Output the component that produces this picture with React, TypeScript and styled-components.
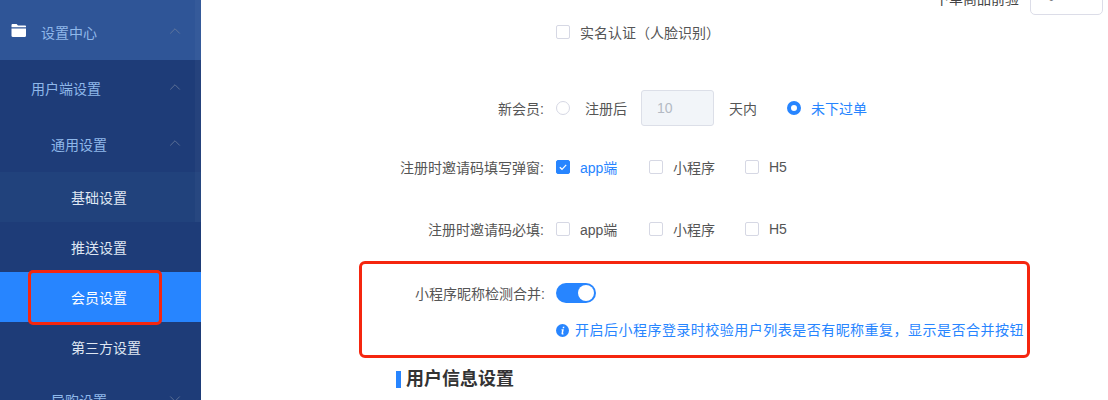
import React from 'react';
import styled, { createGlobalStyle } from 'styled-components';
import { ChevronDown, ChevronUp } from 'lucide-react';

const GlobalStyle = createGlobalStyle`
  html, body {
    margin: 0;
    padding: 0;
    background: #fff;
    font-family: "Liberation Sans", "Noto Sans CJK SC", sans-serif;
  }
`;

const App: React.FC = () => (
  <Page>
    <GlobalStyle />
    <Sidebar>
      <ScrollThumb />
      <TopItem>
        <FolderIcon />
        <TopLabel>设置中心</TopLabel>
        <Arrow><ChevronUp size={18} strokeWidth={1} /></Arrow>
      </TopItem>
      <GroupItem $indent={31}>
        <span>用户端设置</span>
        <Arrow><ChevronUp size={18} strokeWidth={1} /></Arrow>
      </GroupItem>
      <GroupItem $indent={51}>
        <span>通用设置</span>
        <Arrow><ChevronUp size={18} strokeWidth={1} /></Arrow>
      </GroupItem>
      <LeafList>
        <Leaf $shade="#21427c">基础设置</Leaf>
        <Leaf>推送设置</Leaf>
        <Leaf $active>
          会员设置
          <MenuHighlight />
        </Leaf>
        <Leaf>第三方设置</Leaf>
      </LeafList>
      <GroupItem $indent={51}>
        <span>导购设置</span>
        <Arrow><ChevronDown size={18} strokeWidth={1} /></Arrow>
      </GroupItem>
    </Sidebar>
    <Content>
      <TopRow>
        <TopRowLabel>下单商品前验</TopRowLabel>
        <TopInput>0</TopInput>
      </TopRow>
      <Row $height={50} $mt={-8}>
        <Field />
        <Check label="实名认证（人脸识别）" />
      </Row>
      <Row $height={36} $mt={33}>
        <Field>新会员:</Field>
        <RadioBox />
        <OptionText>注册后</OptionText>
        <DaysInput>10</DaysInput>
        <OptionText $gap={15}>天内</OptionText>
        <RadioBox $on $ml={30} />
        <OptionText $on>未下过单</OptionText>
      </Row>
      <Row $height={36} $mt={23}>
        <Field>注册时邀请码填写弹窗:</Field>
        <Check label="app端" width={93} on />
        <Check label="小程序" width={96} />
        <Check label="H5" />
      </Row>
      <Row $height={36} $mt={26}>
        <Field>注册时邀请码必填:</Field>
        <Check label="app端" width={93} />
        <Check label="小程序" width={96} />
        <Check label="H5" />
      </Row>
      <HighlightBox>
        <SwitchRow>
          <Field $inset>小程序昵称检测合并:</Field>
          <Switch><Knob /></Switch>
        </SwitchRow>
        <Hint>
          <InfoIcon />
          开启后小程序登录时校验用户列表是否有昵称重复，显示是否合并按钮
        </Hint>
      </HighlightBox>
      <SectionTitle>用户信息设置</SectionTitle>
    </Content>
  </Page>
);

const Check: React.FC<{ label: string; on?: boolean; width?: number }> = ({ label, on, width }) => (
  <CheckWrap $width={width}>
    <CheckBox $on={on}>
      {on && (
        <svg width="10" height="10" viewBox="0 0 10 10" fill="none">
          <path d="M1.8 5.2 4 7.3 8.2 2.8" stroke="#fff" strokeWidth="1.2" />
        </svg>
      )}
    </CheckBox>
    <CheckText $on={on}>{label}</CheckText>
  </CheckWrap>
);

const FolderIcon: React.FC = () => (
  <FolderSvg width="15" height="13" viewBox="0 0 15 13">
    <path d="M0.5 1.2C0.5 0.6 1 0 1.6 0H5.6L7 1.6H14C14.5 1.6 15 2 15 2.6V3.2H0.5Z" fill="#fff" />
    <path d="M0.5 4.4H15V11.8C15 12.4 14.5 13 14 13H1.6C1 13 0.5 12.4 0.5 11.8Z" fill="#fff" />
  </FolderSvg>
);

const InfoIcon: React.FC = () => (
  <HintSvg width="13" height="13" viewBox="0 0 13 13">
    <circle cx="6.5" cy="6.5" r="6.5" fill="#2785ff" />
    <path d="M6.9 2.7h1.5l-.3 1.5H6.6ZM6.3 5.2h1.5L7 9.2c0 .3.2.4.7.3l-.1.7c-.5.3-2.3.5-2.1-.8l.5-3.2h-.7l.1-.7Z" fill="#fff" />
  </HintSvg>
);

const Page = styled.div`
  display: flex;
  width: 1108px;
  height: 400px;
  overflow: hidden;
  background: #fff;
`;

const Sidebar = styled.nav`
  position: relative;
  width: 201px;
  height: 400px;
  flex-shrink: 0;
  overflow: hidden;
  background: #1e3c78;
  font-size: 14px;
`;

const ScrollThumb = styled.span`
  position: absolute;
  top: 0;
  right: 0;
  width: 6px;
  height: 222px;
  z-index: 1;
  background: rgba(255, 255, 255, 0.03);
`;

const TopItem = styled.div`
  display: flex;
  align-items: center;
  height: 60px;
  padding: 4px 0 0 11px;
  box-sizing: border-box;
  background: #2f5597;
  color: #8fb8ea;
`;

const FolderSvg = styled.svg`
  margin-top: -4px;
`;

const TopLabel = styled.span`
  margin-left: 15px;
`;

const GroupItem = styled.div<{ $indent: number }>`
  display: flex;
  align-items: center;
  height: 56px;
  padding-left: ${(p) => p.$indent}px;
  color: #8fb8ea;
`;

const Arrow = styled.span`
  display: flex;
  margin-left: auto;
  margin-right: 17px;
  margin-top: -3px;
  color: #6d7f9d;
`;

const LeafList = styled.div`
  display: flex;
  flex-direction: column;
`;

const Leaf = styled.div<{ $active?: boolean; $shade?: string }>`
  position: relative;
  display: flex;
  align-items: center;
  height: 50px;
  padding-left: 71px;
  background: ${(p) => (p.$active ? '#2785ff' : p.$shade || '#1e3c78')};
  color: ${(p) => (p.$active ? '#fff' : '#dfe6f2')};
`;

const MenuHighlight = styled.span`
  position: absolute;
  z-index: 2;
  left: 28px;
  top: -2px;
  width: 134px;
  height: 55px;
  box-sizing: border-box;
  border: 3px solid #f5260f;
  border-radius: 5px;
`;

const Content = styled.main`
  flex: 1;
  display: flex;
  flex-direction: column;
  min-width: 0;
  font-size: 14px;
  color: #555;
`;

const TopRow = styled.div`
  display: flex;
  justify-content: flex-end;
  align-items: flex-end;
  height: 15px;
  padding-right: 5px;
`;

const TopRowLabel = styled.span`
  margin: 0 11px 7px 0;
  font-size: 14px;
  line-height: 18px;
  color: #444;
`;

const TopInput = styled.div`
  width: 73px;
  height: 36px;
  flex-shrink: 0;
  margin-top: -21px;
  padding: 0 0 0 17px;
  box-sizing: border-box;
  border: 1px solid #dcdde8;
  border-radius: 5px;
  line-height: 34px;
  font-size: 12px;
  color: #777;
`;

const Row = styled.div<{ $height: number; $mt: number }>`
  display: flex;
  align-items: center;
  height: ${(p) => p.$height}px;
  margin-top: ${(p) => p.$mt}px;
`;

const Field = styled.label<{ $inset?: boolean }>`
  width: ${(p) => (p.$inset ? 194 : 355)}px;
  flex-shrink: 0;
  padding-right: ${(p) => (p.$inset ? 11 : 12)}px;
  box-sizing: border-box;
  text-align: right;
  white-space: nowrap;
  color: #555;
`;

const CheckWrap = styled.span<{ $width?: number }>`
  display: inline-flex;
  align-items: center;
  ${(p) => p.$width && `width: ${p.$width}px;`}
`;

const CheckBox = styled.span<{ $on?: boolean }>`
  display: flex;
  align-items: center;
  justify-content: center;
  width: 14px;
  height: 14px;
  box-sizing: border-box;
  border: 1px solid ${(p) => (p.$on ? '#2785ff' : '#d6d8e4')};
  border-radius: 2px;
  background: ${(p) => (p.$on ? '#2785ff' : '#fff')};
`;

const CheckText = styled.span<{ $on?: boolean }>`
  margin-left: 10px;
  white-space: nowrap;
  color: ${(p) => (p.$on ? '#2785ff' : '#555')};
`;

const RadioBox = styled.span<{ $on?: boolean; $ml?: number }>`
  width: 14px;
  height: 14px;
  flex-shrink: 0;
  box-sizing: border-box;
  margin-left: ${(p) => p.$ml || 0}px;
  border-radius: 50%;
  border: ${(p) => (p.$on ? '4.5px solid #2785ff' : '1px solid #d6d8e4')};
`;

const OptionText = styled.span<{ $on?: boolean; $gap?: number }>`
  margin-left: ${(p) => p.$gap || 15}px;
  white-space: nowrap;
  color: ${(p) => (p.$on ? '#2785ff' : '#555')};
  ${(p) => p.$on && 'margin-left: 10px;'}
`;

const DaysInput = styled.div`
  width: 73px;
  height: 36px;
  margin-left: 14px;
  padding-left: 15px;
  box-sizing: border-box;
  border: 1px solid #dcdfe8;
  border-radius: 3px;
  background: #f2f5f9;
  line-height: 34px;
  font-size: 14px;
  color: #b4bac4;
`;

const HighlightBox = styled.section`
  width: 671px;
  height: 97px;
  margin: 14px 0 0 158px;
  box-sizing: border-box;
  border: 3px solid #f5260f;
  border-radius: 6px;
`;

const SwitchRow = styled.div`
  display: flex;
  align-items: center;
  height: 36px;
  margin-top: 11px;
`;

const Switch = styled.span`
  display: flex;
  justify-content: flex-end;
  align-items: center;
  width: 40px;
  height: 20px;
  padding-right: 2px;
  box-sizing: border-box;
  border-radius: 10px;
  background: #2785ff;
`;

const Knob = styled.span`
  width: 16px;
  height: 16px;
  border-radius: 50%;
  background: #fff;
`;

const Hint = styled.div`
  display: flex;
  align-items: center;
  margin: 9px 0 0 194px;
  font-size: 14px;
  letter-spacing: 0.48px;
  line-height: 20px;
  white-space: nowrap;
  color: #2785ff;
`;

const HintSvg = styled.svg`
  margin-right: 6px;
  flex-shrink: 0;
`;

const SectionTitle = styled.h3`
  margin: 13px 0 0 195px;
  padding-left: 5px;
  border-left: 5px solid #2785ff;
  height: 17px;
  line-height: 17px;
  font-size: 18px;
  font-weight: 700;
  color: #333;
`;

export default App;
